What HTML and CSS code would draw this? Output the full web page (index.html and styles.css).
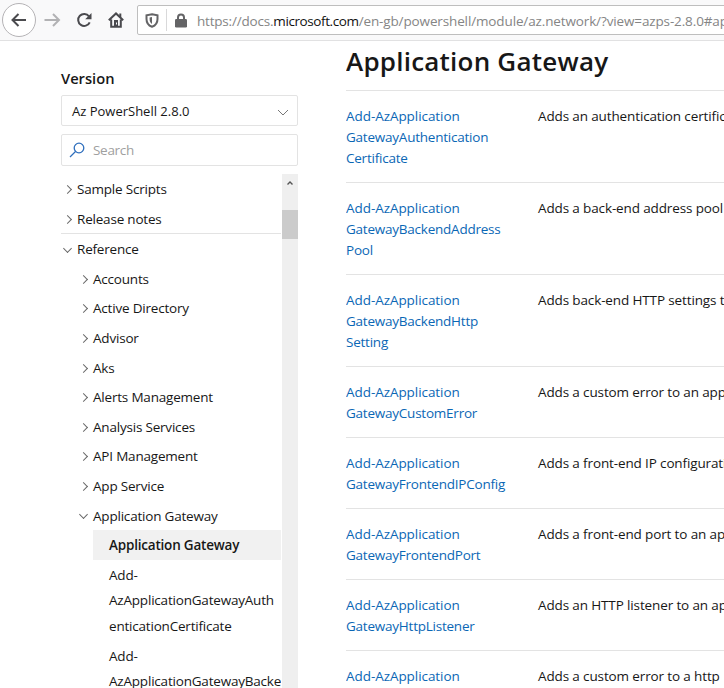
FILE: index.html
```html
<!DOCTYPE html>
<html lang="en">
<head>
<meta charset="utf-8">
<title>Az.Network Module</title>
<link rel="stylesheet" href="styles.css">
</head>
<body>
<header class="toolbar">
  <button class="nav back" aria-label="Back"><svg width="18" height="18" viewBox="0 0 18 18"><path d="M16 9H2.500M8.500 3L2.500 9l6 6"/></svg></button>
  <button class="nav forward" aria-label="Forward"><svg width="18" height="18" viewBox="0 0 18 18"><path d="M1.500 9H15.500M10 3l6 6-6 6"/></svg></button>
  <button class="nav reload" aria-label="Reload"><svg width="16" height="16" viewBox="0 0 16 16"><path d="M13 4.300A6 6 0 1 0 13.700 10.300"/><path class="solid" d="M15.500 1v6.300H9.200z"/></svg></button>
  <button class="nav home" aria-label="Home"><svg width="16" height="16" viewBox="0 0 16 16"><path d="M.8 8.300L8 1.500 15.200 8.300M3.200 7.500v7.300h9.600V7.500"/><path class="solid" fill-rule="evenodd" d="M6 8h4v6.500H6zM8 10.500h1v2H8zM11.300 1.500h2v4h-2z"/></svg></button>
  <div class="address">
    <svg class="shield" width="14" height="15" viewBox="0 0 14 15"><path d="M7 1.200L12.500 2.300V6c0 4-2 6.600-5.500 7.800C3.500 12.600 1.500 10 1.500 6V2.300z"/><path class="solid" d="M7 3.900v7C5.400 10 4.600 8.500 4.600 6V4.400z"/></svg>
    <span class="separator"></span>
    <svg class="lock" width="12" height="15" viewBox="0 0 12 15"><path d="M3 7V4.500a3 3 0 0 1 6 0V7"/><rect class="solid" x="0" y="6" width="12" height="8.500" rx="1.300"/></svg>
    <span class="url"><span class="scheme">https://docs.</span><b>microsoft.com</b><span>/en-gb/powershell/module/az.network/?view=azps-2.8.0#ap</span></span>
  </div>
</header>
<div class="page">
  <aside class="sidebar">
    <div class="label">Version</div>
    <div class="field select"><span>Az PowerShell 2.8.0</span><svg width="12" height="8" viewBox="0 0 12 8"><path d="M1 1l5 5 5-5"/></svg></div>
    <div class="field search"><svg width="16" height="16" viewBox="0 0 16 16"><circle cx="10" cy="6" r="4.800"/><path d="M6.500 9.500L1 15"/></svg><span>Search</span></div>
    <div class="toc">
      <ul class="tree">
        <li class="closed">Sample Scripts</li>
        <li class="closed ruled">Release notes</li>
        <li class="open">Reference</li>
        <li class="closed l2">Accounts</li>
        <li class="closed l2">Active Directory</li>
        <li class="closed l2">Advisor</li>
        <li class="closed l2">Aks</li>
        <li class="closed l2">Alerts Management</li>
        <li class="closed l2">Analysis Services</li>
        <li class="closed l2">API Management</li>
        <li class="closed l2">App Service</li>
        <li class="open l2">Application Gateway</li>
        <li class="l3 current">Application Gateway</li>
        <li class="l3">Add-<br>AzApplicationGatewayAuth<br>enticationCertificate</li>
        <li class="l3">Add-<br>AzApplicationGatewayBacke</li>
      </ul>
      <div class="scrollbar"><svg width="6" height="4" viewBox="0 0 6 4"><path d="M.5 3.500L3 1l2.500 2.500"/></svg><div class="thumb"></div></div>
    </div>
  </aside>
  <main>
    <h2>Application Gateway</h2>
    <div class="row"><a>Add-AzApplication<br>GatewayAuthentication<br>Certificate</a><p>Adds an authentication certificate</p></div>
    <div class="row"><a>Add-AzApplication<br>GatewayBackendAddress<br>Pool</a><p>Adds a back-end address pool</p></div>
    <div class="row"><a>Add-AzApplication<br>GatewayBackendHttp<br>Setting</a><p>Adds back-end HTTP settings to</p></div>
    <div class="row"><a>Add-AzApplication<br>GatewayCustomError</a><p>Adds a custom error to an application</p></div>
    <div class="row"><a>Add-AzApplication<br>GatewayFrontendIPConfig</a><p>Adds a front-end IP configuration</p></div>
    <div class="row"><a>Add-AzApplication<br>GatewayFrontendPort</a><p>Adds a front-end port to an application</p></div>
    <div class="row"><a>Add-AzApplication<br>GatewayHttpListener</a><p>Adds an HTTP listener to an application</p></div>
    <div class="row"><a>Add-AzApplication</a><p>Adds a custom error to a http</p></div>
  </main>
</div>
</body>
</html>
```
FILE: styles.css
```css
* { box-sizing: border-box; }
body { margin: 0; height: 688px; overflow: hidden; background: #fff; color: #171717; font: 13.5px/21px "Open Sans", "Noto Sans", sans-serif; }
svg { flex: none; fill: none; stroke: currentColor; }
.solid { fill: currentColor; stroke: none; }

.toolbar { height: 41px; display: flex; align-items: center; background: #f9f9fa; border-bottom: 1px solid #e1e1e2; overflow: hidden; }
.nav { flex: none; display: flex; align-items: center; justify-content: center; padding: 0; border: 0; background: none; color: #4a4a4e; width: 32px; height: 32px; }
.nav svg { stroke-width: 2; }
.back { width: 34px; height: 34px; margin-left: 2px; border: 1px solid #b5b3b6; border-radius: 50%; background: #fff; }
.forward { color: #b2b2b4; }
.address { flex: none; width: 620px; height: 30px; margin-left: 5px; display: flex; align-items: center; border: 1px solid #bebebe; border-radius: 2px; background: #fff; color: #646466; padding-left: 7px; }
.shield { stroke-width: 2; }
.separator { width: 1px; height: 22px; background: #d9d9da; margin: 0 8px 0 7px; }
.lock { stroke-width: 2; }
.url { margin-left: 10px; padding-top: 2px; white-space: nowrap; color: #858585; letter-spacing: -0.13px; }
.url .scheme { letter-spacing: -0.2px; }
.url b { color: #111; font-weight: 400; letter-spacing: -0.4px; }

.page { display: flex; height: 647px; }
.sidebar { width: 237px; margin-left: 61px; flex: none; display: flex; flex-direction: column; padding-top: 26px; }
.label { flex: none; font-size: 14.7px; font-weight: 600; height: 28px; line-height: 22px; }
.field { flex: none; border: 1px solid #e3e3e3; border-radius: 2px; display: flex; align-items: center; }
.select { height: 31px; padding: 1px 8px 0 10px; justify-content: space-between; margin-bottom: 8px; font-size: 13px; }
.select svg { color: #777; margin-top: 3px; }
.search { height: 32px; padding-left: 7px; gap: 8px; color: #a0a0a0; letter-spacing: -0.3px; }
.search svg { color: #2f6fbd; stroke-width: 1.3; }
.toc { display: flex; flex: 1; min-height: 0; margin-top: 8px; justify-content: space-between; }
.tree { list-style: none; margin: 0; padding: 0; width: 220px; overflow: hidden; line-height: 25.6px; white-space: nowrap; letter-spacing: -0.2px; }
.tree li { padding: 3px 0 1px 16px; position: relative; }
.tree .ruled { border-bottom: 1px solid #e3e3e3; }
.tree .l2 { padding-left: 32px; }
.tree .l3 { padding-left: 48px; }
.tree .current { margin-left: 32px; padding-left: 16px; background: #f1f1f1; font-weight: 600; }
.closed::before, .open::before { content: ""; width: 6px; height: 6px; border: solid #666; border-width: 1px 1px 0 0; position: absolute; }
.closed::before { transform: rotate(45deg) scale(.9); left: 2.5px; top: 12px; }
.open::before { transform: rotate(135deg) scale(.9); left: 3px; top: 10.5px; }
.l2.closed::before { left: 18.5px; }
.l2.open::before { left: 19px; }
.scrollbar { width: 16px; background: #efefef; display: flex; flex-direction: column; align-items: center; color: #555; }
.scrollbar svg { margin-top: 7px; stroke-width: 1.4; }
.thumb { width: 16px; height: 29px; background: #cbcbcb; margin-top: 25px; }

main { margin-left: 48px; flex: 1; min-width: 0; overflow: hidden; }
h2 { margin: 0; height: 49px; font-size: 26px; font-weight: 600; line-height: 41px; white-space: nowrap; letter-spacing: 0.22px; }
.row { display: grid; grid-template-columns: 192px 400px; border-top: 1px solid #e3e3e3; padding: 15px 0 13px; }
.row a { color: #0b67b5; letter-spacing: -0.23px; }
.row a::first-line { letter-spacing: -0.06px; }
.row p { margin: 0; white-space: nowrap; letter-spacing: -0.13px; }
```
